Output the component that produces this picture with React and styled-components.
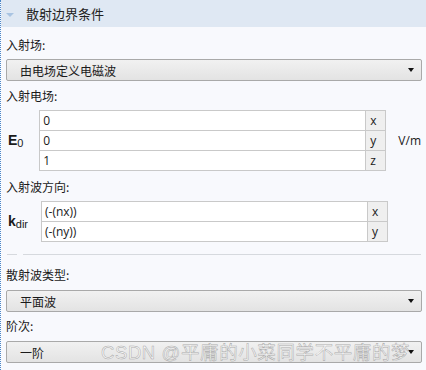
import React from "react";
import styled, { createGlobalStyle } from "styled-components";

const GlobalStyle = createGlobalStyle`
  html, body {
    margin: 0;
    padding: 0;
    background: #f8f9fd;
  }
  body {
    font-family: "Noto Sans CJK SC", "Liberation Sans", sans-serif;
    font-size: 12px;
    color: #1a1a1a;
  }
`;

const Panel = styled.div`
  position: relative;
  width: 426px;
  height: 370px;
  box-sizing: border-box;
  border-left: 1px dotted #4a86c8;
  background: #f8f9fd;
  overflow: hidden;
`;

const Header = styled.div`
  height: 27px;
  background: #dfe8f3;
  display: flex;
  align-items: center;
  padding-left: 5px;
  gap: 12px;
  font-size: 13px;
  color: #222;
`;

const Caret = styled.span`
  width: 0;
  height: 0;
  border-left: 4px solid transparent;
  border-right: 4px solid transparent;
  border-top: 4px solid #a9c4e2;
  margin-top: 2px;
`;

const Body = styled.div`
  padding: 10px 5px 0 5px;
  display: flex;
  flex-direction: column;
`;

const Label = styled.div`
  height: 16px;
  line-height: 16px;
  margin-top: ${(p) => p.$top || 0}px;
  margin-bottom: ${(p) => p.$bottom || 6}px;
`;

const Select = styled.div`
  height: 20px;
  box-sizing: content-box;
  border: 1px solid #a9a9a9;
  border-radius: 2px;
  background: linear-gradient(#f1f1f1, #e3e3e3);
  display: flex;
  align-items: center;
  justify-content: space-between;
  padding: 0 7px 0 13px;
  width: 394px;
`;

const Arrow = styled.span`
  width: 0;
  height: 0;
  border-left: 3.5px solid transparent;
  border-right: 3.5px solid transparent;
  border-top: 4px solid #111;
`;

const VectorRow = styled.div`
  display: flex;
  align-items: center;
`;

const Symbol = styled.div`
  width: 35px;
  padding-left: 2px;
  box-sizing: border-box;
  font-family: "Liberation Sans", sans-serif;
  font-weight: bold;
  font-size: 14px;
  sub {
    font-weight: normal;
    font-size: 11px;
    vertical-align: -2px;
  }
`;

const Grid = styled.div`
  display: grid;
  grid-template-columns: 326px 20px;
  border-top: 1px solid #c9c9c9;
  border-left: 1px solid #c9c9c9;
  font-family: "Open Sans", "Liberation Sans", sans-serif;
  font-size: 12px;
`;

const Cell = styled.div`
  height: 20px;
  line-height: 19px;
  box-sizing: border-box;
  border-right: 1px solid #c9c9c9;
  border-bottom: 1px solid #c9c9c9;
  background: ${(p) => (p.$unit ? "#efefef" : "#ffffff")};
  padding-left: ${(p) => (p.$unit ? 4 : 3)}px;
`;

const Unit = styled.div`
  margin-left: 12px;
  font-family: "Open Sans", "Liberation Sans", sans-serif;
  font-size: 12px;
`;

const Separator = styled.div`
  display: flex;
  gap: 6px;
  margin: 12px 0 0 1px;
  span {
    height: 1px;
    background: #d6d9de;
  }
  span:first-child {
    width: 10px;
  }
  span:last-child {
    flex: 1;
  }
`;

const Watermark = styled.div`
  position: absolute;
  left: 100px;
  top: 338px;
  font-size: 18.5px;
  color: rgba(255, 255, 255, 0.6);
  -webkit-text-stroke: 0.5px rgba(135, 135, 135, 0.7);
  letter-spacing: 0.6px;
  white-space: nowrap;
  font-family: "Liberation Sans", "Noto Sans CJK SC", sans-serif;
`;

function Vector({ symbol, sub, rows, unit }) {
  return (
    <VectorRow>
      <Symbol>
        {symbol}
        <sub>{sub}</sub>
      </Symbol>
      <Grid>
        {rows.map(([v, u]) => (
          <React.Fragment key={u}>
            <Cell>{v}</Cell>
            <Cell $unit>{u}</Cell>
          </React.Fragment>
        ))}
      </Grid>
      {unit && <Unit>{unit}</Unit>}
    </VectorRow>
  );
}

export default function App() {
  return (
    <>
      <GlobalStyle />
      <Panel>
        <Header>
          <Caret />
          散射边界条件
        </Header>
        <Body>
          <Label>入射场:</Label>
          <Select>
            由电场定义电磁波
            <Arrow />
          </Select>
          <Label $top={7}>入射电场:</Label>
          <Vector
            symbol="E"
            sub="0"
            rows={[
              ["0", "x"],
              ["0", "y"],
              ["1", "z"],
            ]}
            unit="V/m"
          />
          <Label $top={8}>入射波方向:</Label>
          <Vector
            symbol="k"
            sub="dir"
            rows={[
              ["(-(nx))", "x"],
              ["(-(ny))", "y"],
            ]}
          />
          <Separator>
            <span />
            <span />
          </Separator>
          <Label $top={12} $bottom={7}>散射波类型:</Label>
          <Select>
            平面波
            <Arrow />
          </Select>
          <Label $top={6} $bottom={7}>阶次:</Label>
          <Select>
            一阶
            <Arrow />
          </Select>
        </Body>
        <Watermark>CSDN @平庸的小菜同学不平庸的梦</Watermark>
      </Panel>
    </>
  );
}
